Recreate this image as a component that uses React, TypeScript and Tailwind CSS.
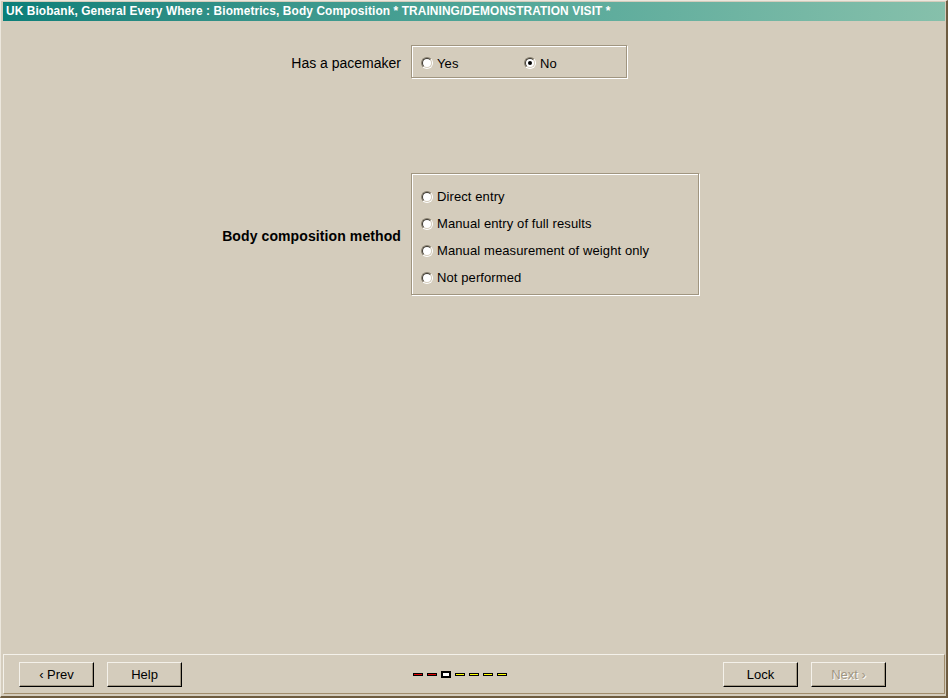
import React from "react";

function Radio({ checked = false }: { checked?: boolean }) {
  return (
    <div className="w-[12px] h-[12px] rounded-full border border-t-[#8a8272] border-l-[#8a8272] border-r-white border-b-white shrink-0">
      <div className="w-full h-full rounded-full border border-t-[#3c3830] border-l-[#3c3830] border-r-[#d4ccbc] border-b-[#d4ccbc] bg-white flex items-center justify-center">
        {checked && <div className="w-[4px] h-[4px] rounded-full bg-black" />}
      </div>
    </div>
  );
}

function Option({ label, checked = false, className = "" }: { label: string; checked?: boolean; className?: string }) {
  return (
    <div className={"flex items-center gap-[4px] " + className}>
      <Radio checked={checked} />
      <span className="leading-none tracking-[0.1px]">{label}</span>
    </div>
  );
}

function Button({ label, disabled = false, className = "" }: { label: string; disabled?: boolean; className?: string }) {
  return (
    <div
      className={
        "w-[75px] h-[25px] border border-t-[#f4f1ea] border-l-[#f4f1ea] border-r-black border-b-black shadow-[inset_-1px_-1px_0_#a09682] flex items-center justify-center text-[13px] " +
        (disabled ? "text-[#a09682] [text-shadow:1px_1px_0_#ffffff] " : "text-black ") +
        className
      }
    >
      {label}
    </div>
  );
}

export default function App() {
  return (
    <div
      className="w-[948px] h-[698px] bg-[#d4ccbc] border-t border-l border-t-[#ece7dd] border-l-[#ece7dd] border-r-2 border-b-2 border-r-[#6e5c40] border-b-[#6e5c40] flex flex-col text-black"
      style={{ fontFamily: '"Liberation Sans", Arial, sans-serif' }}
    >
      <div className="ml-[2px] mt-[1px] mr-[1px] h-[19px] bg-gradient-to-r from-[#0a7f79] via-[#4ea597] to-[#86c0ab] flex items-center pl-[3px]">
        <span className="text-white font-bold text-[11.9px] tracking-[0.1px] leading-none">
          UK Biobank, General Every Where : Biometrics, Body Composition * TRAINING/DEMONSTRATION VISIT *
        </span>
      </div>

      <div className="flex-1 flex flex-col text-[13px]">
        <div className="flex mt-[24px]">
          <div className="w-[400px] flex items-center justify-end pt-[3px] text-[14px]">Has a pacemaker</div>
          <div className="ml-[10px] w-[216px] h-[33px] border border-[#a09580] shadow-[inset_1px_1px_0_#ffffff,1px_1px_0_#ffffff] flex items-center pt-[3px] pl-[9px]">
            <Option label="Yes" className="w-[103px]" />
            <Option label="No" checked />
          </div>
        </div>

        <div className="flex mt-[95px]">
          <div className="w-[400px] flex items-center justify-end font-bold pt-[4px] text-[14px] tracking-[0.1px]">Body composition method</div>
          <div className="ml-[10px] w-[288px] h-[122px] border border-[#a09580] shadow-[inset_1px_1px_0_#ffffff,1px_1px_0_#ffffff] flex flex-col pt-[9px] pl-[9px]">
            <div className="h-[27px] flex items-center"><Option label="Direct entry" /></div>
            <div className="h-[27px] flex items-center"><Option label="Manual entry of full results" /></div>
            <div className="h-[27px] flex items-center"><Option label="Manual measurement of weight only" /></div>
            <div className="h-[27px] flex items-center"><Option label="Not performed" /></div>
          </div>
        </div>
      </div>

      <div className="ml-[2px] mr-[1px] mb-[2px] h-[40px] border-t border-l border-t-[#f4f1ea] border-l-[#f4f1ea] border-r border-b border-r-[#a08c6c] border-b-[#a08c6c] flex items-center pl-[15px] pt-[1px]">
        <Button label="‹ Prev" />
        <Button label="Help" className="ml-[13px]" />
        <div className="ml-[231px] flex items-center gap-[4px]">
          <div className="w-[10px] h-[3px] bg-[#e00000] border border-black" />
          <div className="w-[10px] h-[3px] bg-[#e00000] border border-black" />
          <div className="w-[10px] h-[7px] bg-white border-2 border-black" />
          <div className="w-[10px] h-[3px] bg-[#ffff00] border border-black" />
          <div className="w-[10px] h-[3px] bg-[#ffff00] border border-black" />
          <div className="w-[10px] h-[3px] bg-[#ffff00] border border-black" />
          <div className="w-[10px] h-[3px] bg-[#ffff00] border border-black" />
        </div>
        <div className="flex-1" />
        <Button label="Lock" />
        <Button label="Next ›" disabled className="ml-[13px] mr-[58px]" />
      </div>
    </div>
  );
}
